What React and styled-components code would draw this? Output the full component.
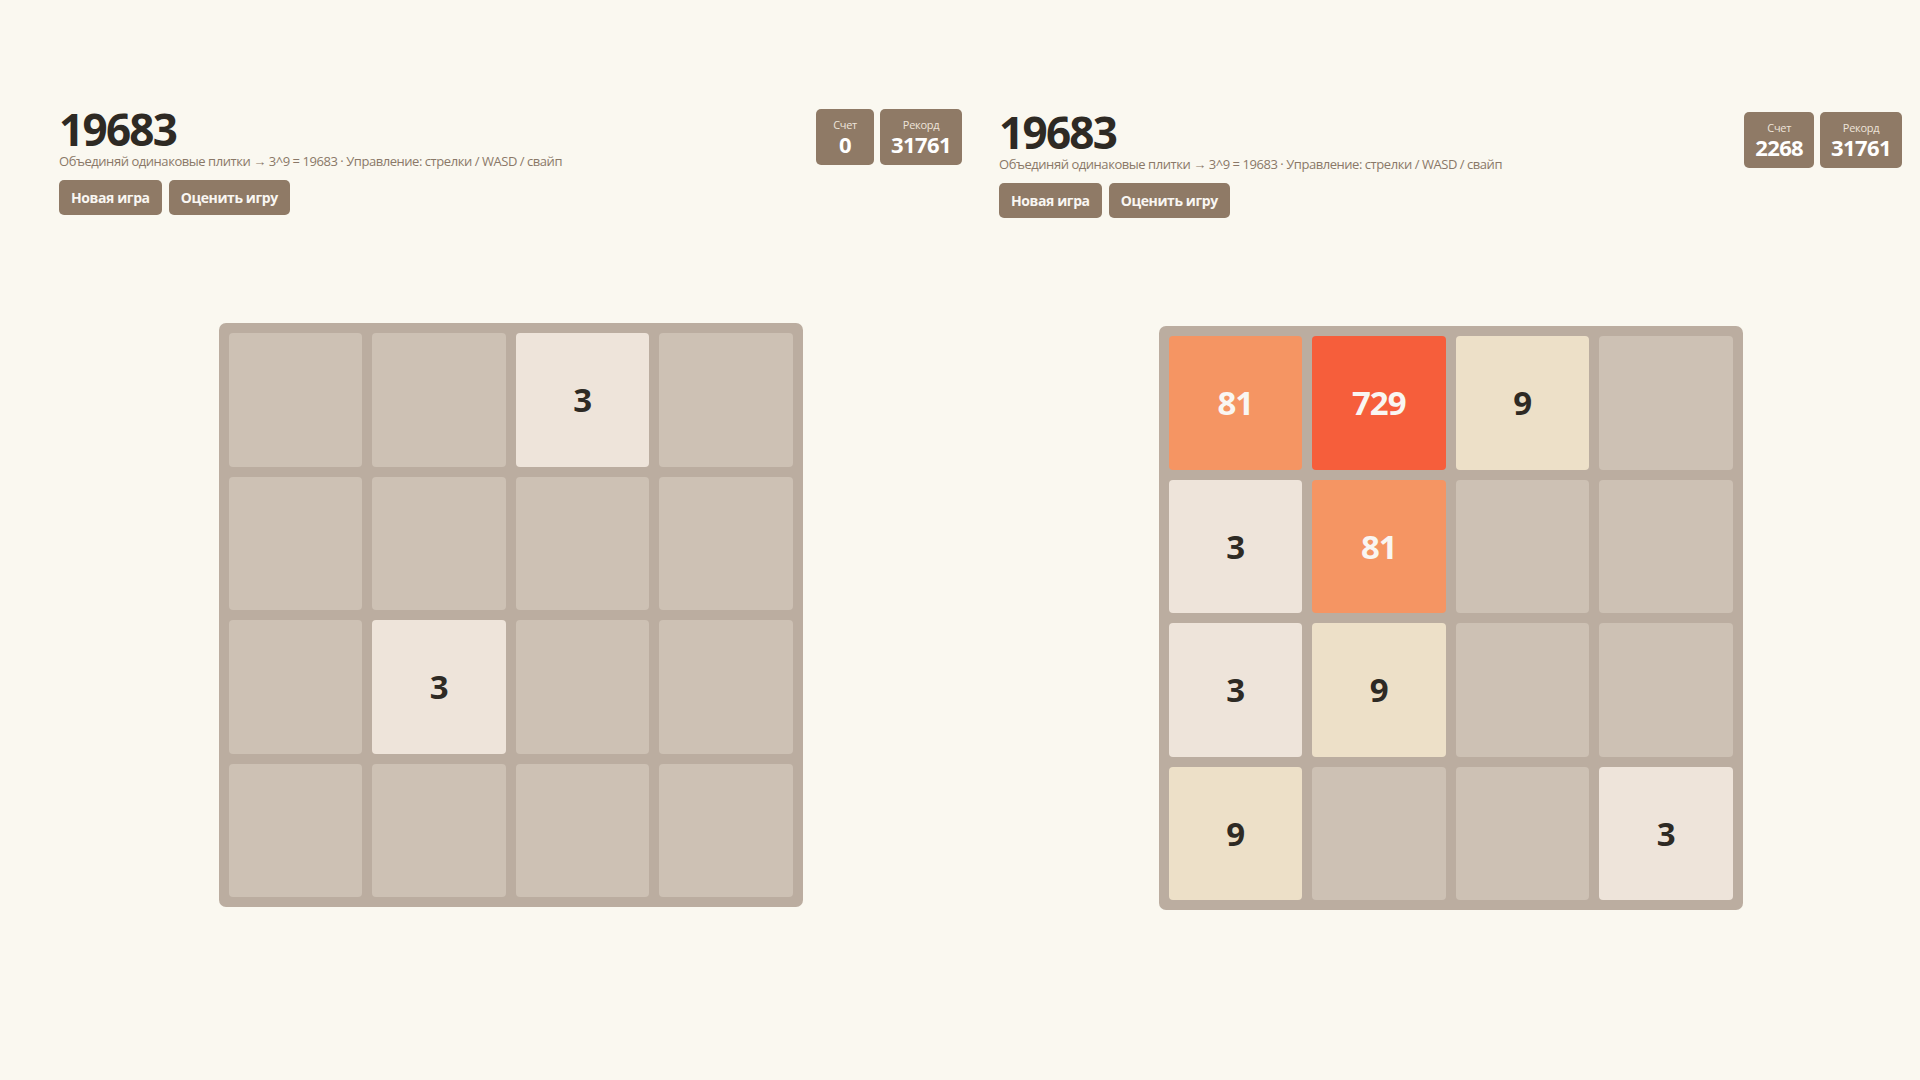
import React from 'react';
import styled, { createGlobalStyle } from 'styled-components';

const GlobalStyle = createGlobalStyle`
  html, body {
    margin: 0;
    padding: 0;
    background: #faf8f0;
    font-family: "Open Sans", "Noto Sans", sans-serif;
    color: #2e2a24;
  }
`;

const tileColors = {
  0: { bg: '#cdc1b4', fg: 'transparent' },
  3: { bg: '#eee4da', fg: '#2e2a24' },
  9: { bg: '#ede0c8', fg: '#2e2a24' },
  81: { bg: '#f59563', fg: '#f9f6f2' },
  729: { bg: '#f65e3b', fg: '#f9f6f2' },
};

const Page = styled.div`
  display: grid;
  grid-template-columns: 903px 903px;
  column-gap: 37px;
  padding: 104px 18px 0 59px;
  min-height: 1080px;
  box-sizing: border-box;
`;

const Panel = styled.section`
  display: flex;
  flex-direction: column;
  margin-top: ${(p) => p.$shift || 0}px;
`;

const Header = styled.header`
  display: flex;
  justify-content: space-between;
  align-items: flex-start;
`;

const Intro = styled.div`
  display: flex;
  flex-direction: column;
`;

const Title = styled.h1`
  margin: 2px 0 0;
  font-size: 44px;
  line-height: 47px;
  font-weight: 700;
  letter-spacing: -1.7px;
  color: #2e2a24;
`;

const Hint = styled.p`
  margin: 0;
  font-size: 13px;
  line-height: 16px;
  letter-spacing: -0.45px;
  color: #8a7868;
`;

const Actions = styled.div`
  display: flex;
  gap: 7px;
  margin-top: 11px;
`;

const Button = styled.button`
  height: 35px;
  padding: 0 12px;
  border: none;
  border-radius: 5px;
  background: #8f7a66;
  color: #f9f6f2;
  font-family: inherit;
  font-size: 14px;
  font-weight: 700;
  letter-spacing: -0.4px;
  cursor: pointer;
`;

const Scores = styled.div`
  display: flex;
  gap: 6px;
  margin-top: 5px;
`;

const ScoreBox = styled.div`
  min-width: 58px;
  height: 56px;
  padding: 0 11px;
  box-sizing: border-box;
  border-radius: 5px;
  background: #8f7a66;
  display: flex;
  flex-direction: column;
  align-items: center;
  justify-content: center;
`;

const ScoreLabel = styled.span`
  font-size: 11px;
  line-height: 14px;
  letter-spacing: -0.3px;
  color: #eee4da;
`;

const ScoreValue = styled.span`
  font-size: 22px;
  line-height: 25px;
  font-weight: 700;
  letter-spacing: -0.6px;
  color: #ffffff;
`;

const BoardWrap = styled.div`
  display: flex;
  justify-content: center;
  margin-top: 108px;
`;

const Board = styled.div`
  width: 584px;
  height: 584px;
  box-sizing: border-box;
  padding: 10px;
  border-radius: 7px;
  background: #bbada0;
  display: grid;
  grid-template-columns: repeat(4, 1fr);
  grid-template-rows: repeat(4, 1fr);
  gap: 10px;
`;

const Tile = styled.div`
  border-radius: 4px;
  background: ${(p) => tileColors[p.$v].bg};
  color: ${(p) => tileColors[p.$v].fg};
  display: flex;
  align-items: center;
  justify-content: center;
  font-size: 33px;
  font-weight: 700;
  letter-spacing: -1px;
`;

const games = [
  {
    score: 0,
    shift: 0,
    cells: [0, 0, 3, 0, 0, 0, 0, 0, 0, 3, 0, 0, 0, 0, 0, 0],
  },
  {
    score: 2268,
    shift: 3,
    cells: [81, 729, 9, 0, 3, 81, 0, 0, 3, 9, 0, 0, 9, 0, 0, 3],
  },
];

const Game = ({ score, shift, cells }) => (
  <Panel $shift={shift}>
    <Header>
      <Intro>
        <Title>19683</Title>
        <Hint>Объединяй одинаковые плитки → 3^9 = 19683 · Управление: стрелки / WASD / свайп</Hint>
        <Actions>
          <Button>Новая игра</Button>
          <Button>Оценить игру</Button>
        </Actions>
      </Intro>
      <Scores>
        <ScoreBox>
          <ScoreLabel>Счет</ScoreLabel>
          <ScoreValue>{score}</ScoreValue>
        </ScoreBox>
        <ScoreBox>
          <ScoreLabel>Рекорд</ScoreLabel>
          <ScoreValue>31761</ScoreValue>
        </ScoreBox>
      </Scores>
    </Header>
    <BoardWrap>
      <Board>
        {cells.map((v, i) => (
          <Tile key={i} $v={v}>
            {v || ''}
          </Tile>
        ))}
      </Board>
    </BoardWrap>
  </Panel>
);

export default function App() {
  return (
    <>
      <GlobalStyle />
      <Page>
        {games.map((g, i) => (
          <Game key={i} {...g} />
        ))}
      </Page>
    </>
  );
}
